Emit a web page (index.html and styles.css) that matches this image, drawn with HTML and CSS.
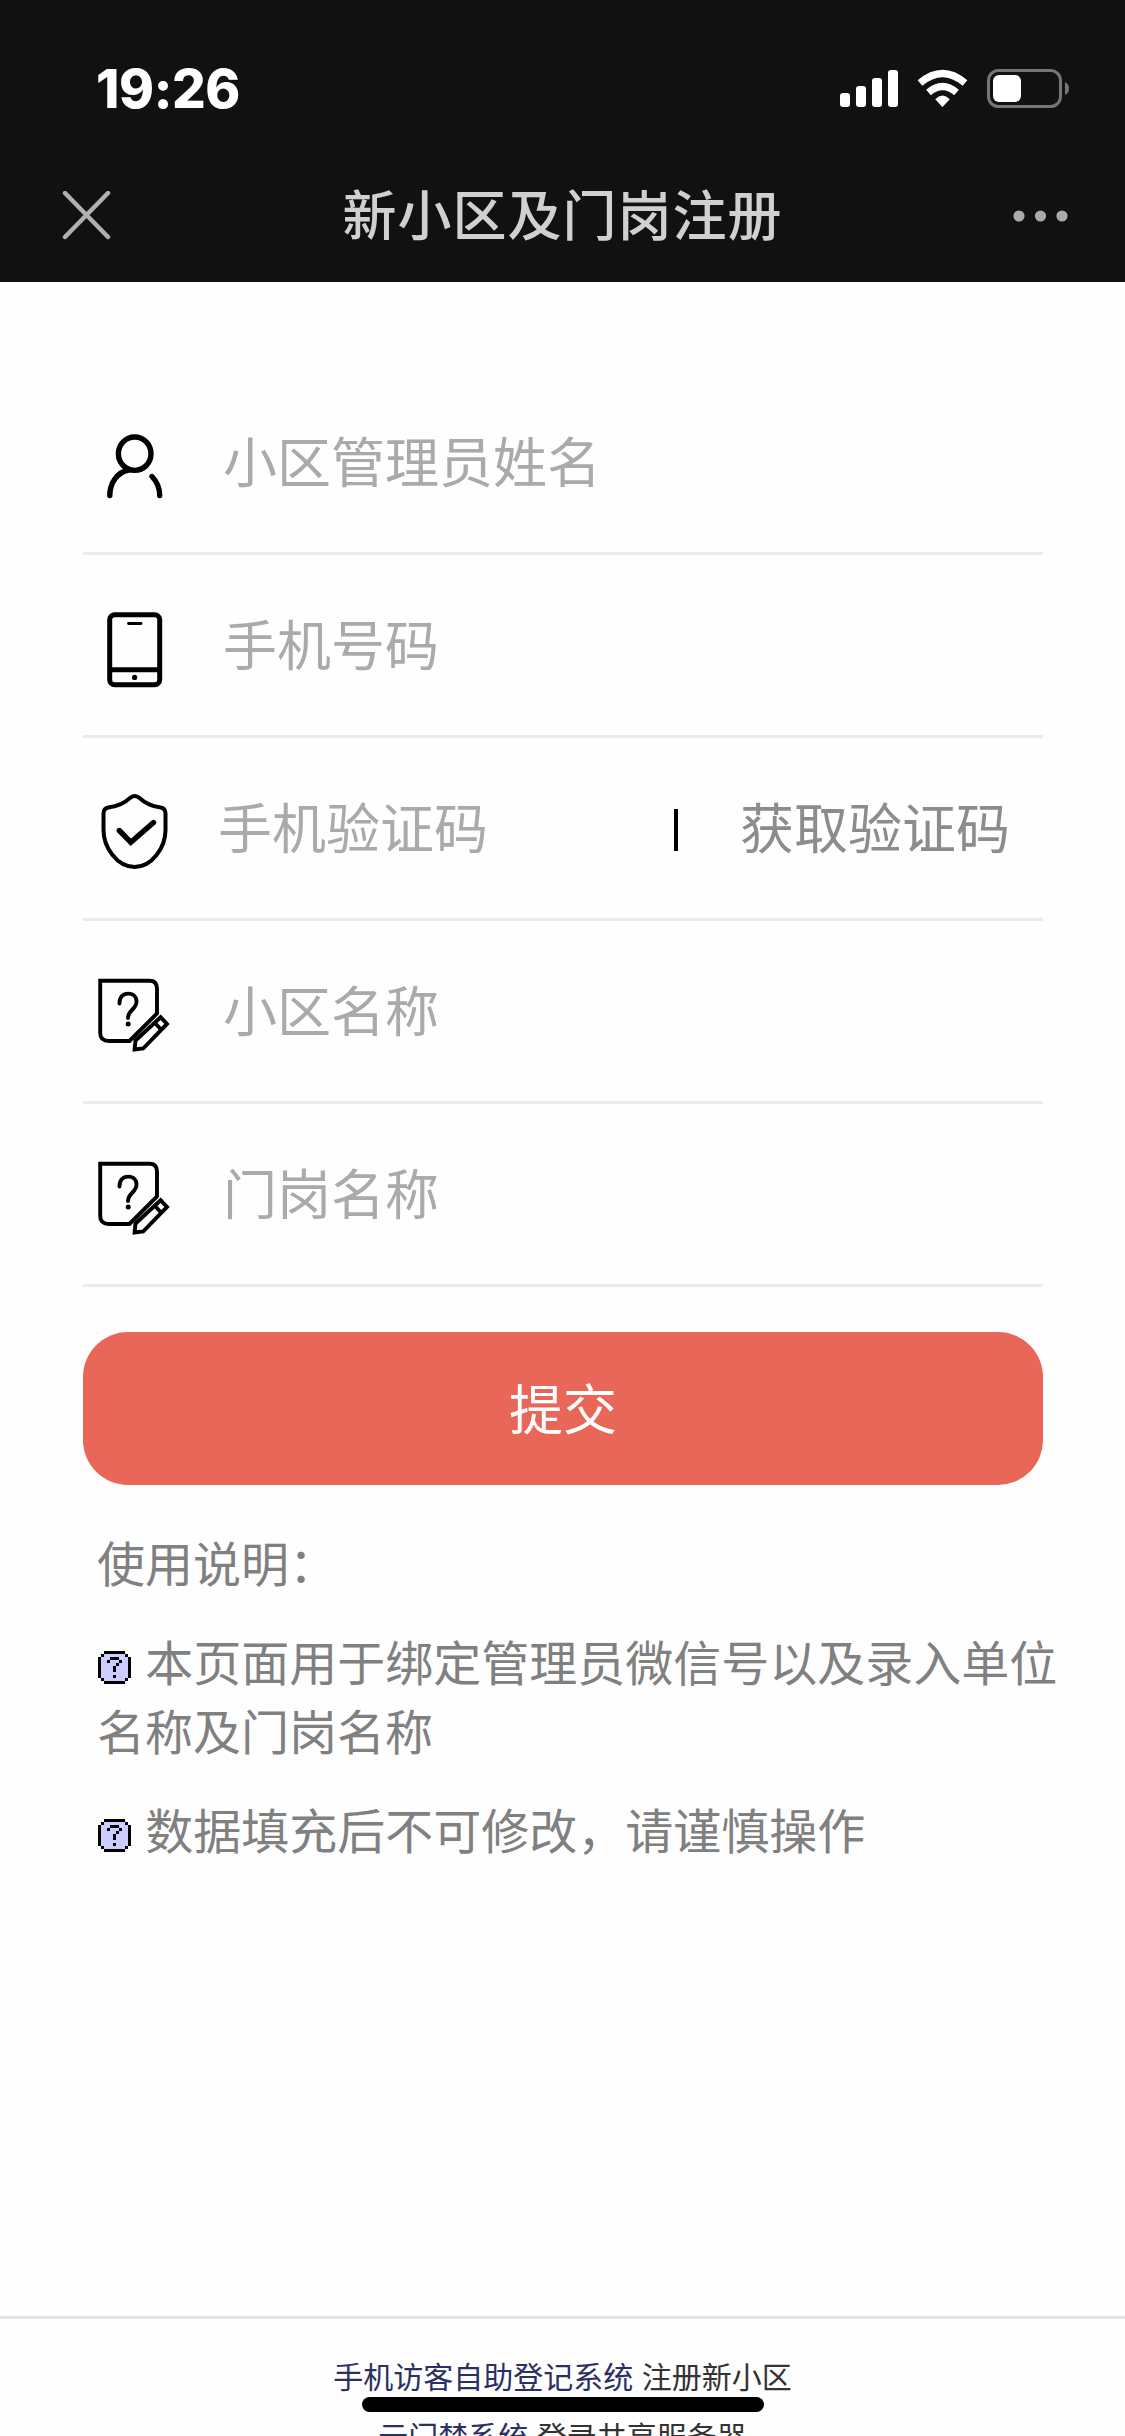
FILE: index.html
```html
<!DOCTYPE html>
<html lang="zh-CN">
<head>
<meta charset="utf-8">
<title>新小区及门岗注册</title>
<link rel="stylesheet" href="styles.css">
</head>
<body>
<svg class="defs" aria-hidden="true">
  <symbol id="note" viewBox="0 0 90 90">
    <g fill="none" stroke="#000" stroke-width="3.9">
      <path d="M10.200 14.700H59.500Q67 14.700 67 22.500V47.500L39.500 75H19Q10.200 75 10.200 67Z"/>
      <path d="M29.500 37.500C29.500 31 33 27.600 38.200 27.600C43.500 27.600 46.500 31 46.500 35.500C46.500 43.500 38 44 38 52" stroke-linecap="round"/>
      <path d="M70.600 51.200L77 57.900L53.200 82.500L44.600 83.500L45.500 74.500ZM65 57L71 63.500"/>
    </g>
    <circle cx="38.200" cy="58" r="2.500"/>
  </symbol>
  <symbol id="help" viewBox="0 0 11 11" shape-rendering="crispEdges">
    <path fill="#ccf" d="M2 0H9V1H10V2H11V9H10V10H9V11H2V10H1V9H0V2H1V1H2Z"/>
    <path d="M2 0H9V1H2ZM1 1H2V2H1ZM9 1H10V2H9ZM0 2H1V9H0ZM10 2H11V9H10ZM1 9H2V10H1ZM9 9H10V10H9ZM2 10H9V11H2ZM4 2H7V3H4ZM3 3H4V4H3ZM7 3H8V4H7ZM6 4H7V5H6ZM5 5H6V7H5ZM5 8H6V9H5Z"/>
  </symbol>
</svg>
<header class="top">
  <div class="status">
    <span class="time">19:26</span>
    <svg class="indicators" width="250" height="60" viewBox="0 0 250 60">
      <g fill="#fff">
        <rect x="10" y="33" width="10" height="14" rx="3"/>
        <rect x="26" y="26" width="10" height="21" rx="3"/>
        <rect x="42" y="18" width="10" height="29" rx="3"/>
        <rect x="58" y="10" width="10" height="37" rx="3"/>
        <path d="M112.500 47L105.200 39.200Q112.500 32 119.800 39.200Z"/>
      </g>
      <g fill="none" stroke="#fff" stroke-width="7.200">
        <path d="M90 23Q112.500 4 135 23"/>
        <path d="M98.500 32.500Q112.500 20.500 126.500 32.500"/>
      </g>
      <rect x="158.500" y="10.500" width="72" height="36" rx="10" fill="none" stroke="#757575" stroke-width="3"/>
      <rect x="163" y="15" width="28" height="27" rx="6" fill="#fff"/>
      <path d="M235 22Q239 24 239 28.500T235 35Z" fill="#757575"/>
    </svg>
  </div>
  <div class="nav">
    <svg class="close" width="50" height="50" viewBox="0 0 50 50"><path d="M3 2L46 46M46 2L3 46" stroke="#b0b0b0" stroke-width="4.500" stroke-linecap="round"/></svg>
    <h1 class="title">新小区及门岗注册</h1>
    <svg class="more" width="56" height="12" viewBox="0 0 56 12" fill="#aaa"><circle cx="6" cy="6" r="5.600"/><circle cx="27.500" cy="6" r="5.600"/><circle cx="49" cy="6" r="5.600"/></svg>
  </div>
</header>
<main class="page">
  <form class="form">
    <label class="row">
      <svg class="icon" viewBox="0 0 90 90"><g fill="none" stroke="#000" stroke-width="5.400" stroke-linecap="round"><ellipse cx="44.700" cy="36.700" rx="16.300" ry="16.700"/><path d="M38.500 53C27 55.500 19.800 66 19.800 78.500M62 59.500Q69.700 67.500 69.700 78.500"/></g></svg>
      <span class="hint">小区管理员姓名</span>
    </label>
    <label class="row">
      <svg class="icon" viewBox="0 0 90 90"><g fill="none" stroke="#000" stroke-width="5"><rect x="19.700" y="14.800" width="50" height="70" rx="5"/><path d="M20 69.800H70"/><path d="M38.500 23.500H51" stroke-width="2.800" stroke-linecap="round"/></g><circle cx="44.600" cy="77.400" r="2.600"/></svg>
      <span class="hint">手机号码</span>
    </label>
    <div class="row row-code">
      <svg class="icon" viewBox="0 0 90 90"><g fill="none" stroke="#000"><path d="M41 14.300Q44.700 11.700 48.500 14.300C55.500 20.500 61.500 23.500 69.500 24.300Q75.500 25 75.500 30.500V47C75.500 64.500 62 84 44.600 84S13.500 64.500 13.500 47V30.500Q13.500 25 19.500 24.300C27.500 23.500 34 20.500 41 14.300Z" stroke-width="4"/><path d="M29.300 47.500L40.800 59.300L63.500 39.500" stroke-width="5.400" stroke-linecap="round"/></g></svg>
      <span class="hint">手机验证码</span>
      <i class="bar"></i>
      <span class="send">获取验证码</span>
    </div>
    <label class="row">
      <svg class="icon"><use href="#note"/></svg>
      <span class="hint">小区名称</span>
    </label>
    <label class="row">
      <svg class="icon"><use href="#note"/></svg>
      <span class="hint">门岗名称</span>
    </label>
    <button class="submit" type="button">提交</button>
  </form>
  <section class="notes">
    <p>使用说明：</p>
    <p><svg class="help"><use href="#help"/></svg> 本页面用于绑定管理员微信号以及录入单位名称及门岗名称</p>
    <p><svg class="help"><use href="#help"/></svg> 数据填充后不可修改，请谨慎操作</p>
  </section>
</main>
<footer class="footer">
  <div><a class="link">手机访客自助登记系统</a> 注册新小区</div>
  <div><a class="link">云门禁系统</a> 登录共享服务器</div>
</footer>
<div class="home"></div>
</body>
</html>
```
FILE: styles.css
```css
* { box-sizing: border-box; }
body {
  margin: 0;
  position: relative;
  display: flex;
  flex-direction: column;
  width: 1125px;
  height: 2436px;
  overflow: hidden;
  background: #fefefe;
  font-family: "Liberation Sans", "Noto Sans CJK SC", sans-serif;
}
.defs { display: none; }
.top { flex: none; height: 282px; background: #111; }
.status {
  display: flex;
  justify-content: space-between;
  align-items: center;
  height: 150px;
  padding: 30px 45px 0 96px;
}
.time {
  color: #fff;
  font: 800 53px/60px Inter, sans-serif;
  letter-spacing: -0.4px;
  padding-bottom: 2px;
}
.nav {
  display: flex;
  justify-content: space-between;
  align-items: center;
  height: 132px;
  padding: 0 56px 0 62px;
}
.title {
  margin: 0;
  padding-bottom: 6px;
  color: #d0d0d0;
  font-size: 54px;
  line-height: 80px;
  font-weight: 500;
  letter-spacing: 1px;
  font-family: "Noto Sans CJK SC", sans-serif;
}
.page { flex: 1; }
.form { width: 960px; margin: 90px 0 0 83px; }
.row {
  display: flex;
  align-items: center;
  height: 183px;
  padding-left: 7px;
  border-bottom: 3px solid #ebebeb;
  font-size: 54px;
}
.icon { flex: none; width: 90px; height: 90px; }
.hint { margin-left: 43px; padding-bottom: 5px; color: #aaa; }
.row-code .hint { margin-left: 38px; width: 456px; }
.bar { width: 4px; height: 42px; margin-top: 4px; background: #000; }
.send { margin-left: 62px; padding-bottom: 5px; color: #8c8c8c; }
.submit {
  display: block;
  width: 100%;
  height: 153px;
  margin: 45px 0 0;
  padding: 0 0 5px;
  border: 0;
  border-radius: 45px;
  background: #e96758;
  color: #fff;
  font: 54px "Noto Sans CJK SC", sans-serif;
}
.notes {
  width: 980px;
  margin: 46px 0 0 97px;
  color: #808080;
  font-size: 48px;
  line-height: 69px;
}
.notes p { margin: 0 0 30px; }
.help { width: 33px; height: 33px; margin: 0 1px; vertical-align: -3px; }
.footer {
  flex: none;
  height: 120px;
  padding-top: 29px;
  border-top: 3px solid #e5e5e5;
  color: #333;
  font-size: 30px;
  line-height: 60px;
  text-align: center;
}
.link { color: #2b2f63; }
.home {
  position: absolute;
  left: 362px;
  top: 2397px;
  width: 402px;
  height: 15px;
  border-radius: 8px;
  background: #000;
}
```
